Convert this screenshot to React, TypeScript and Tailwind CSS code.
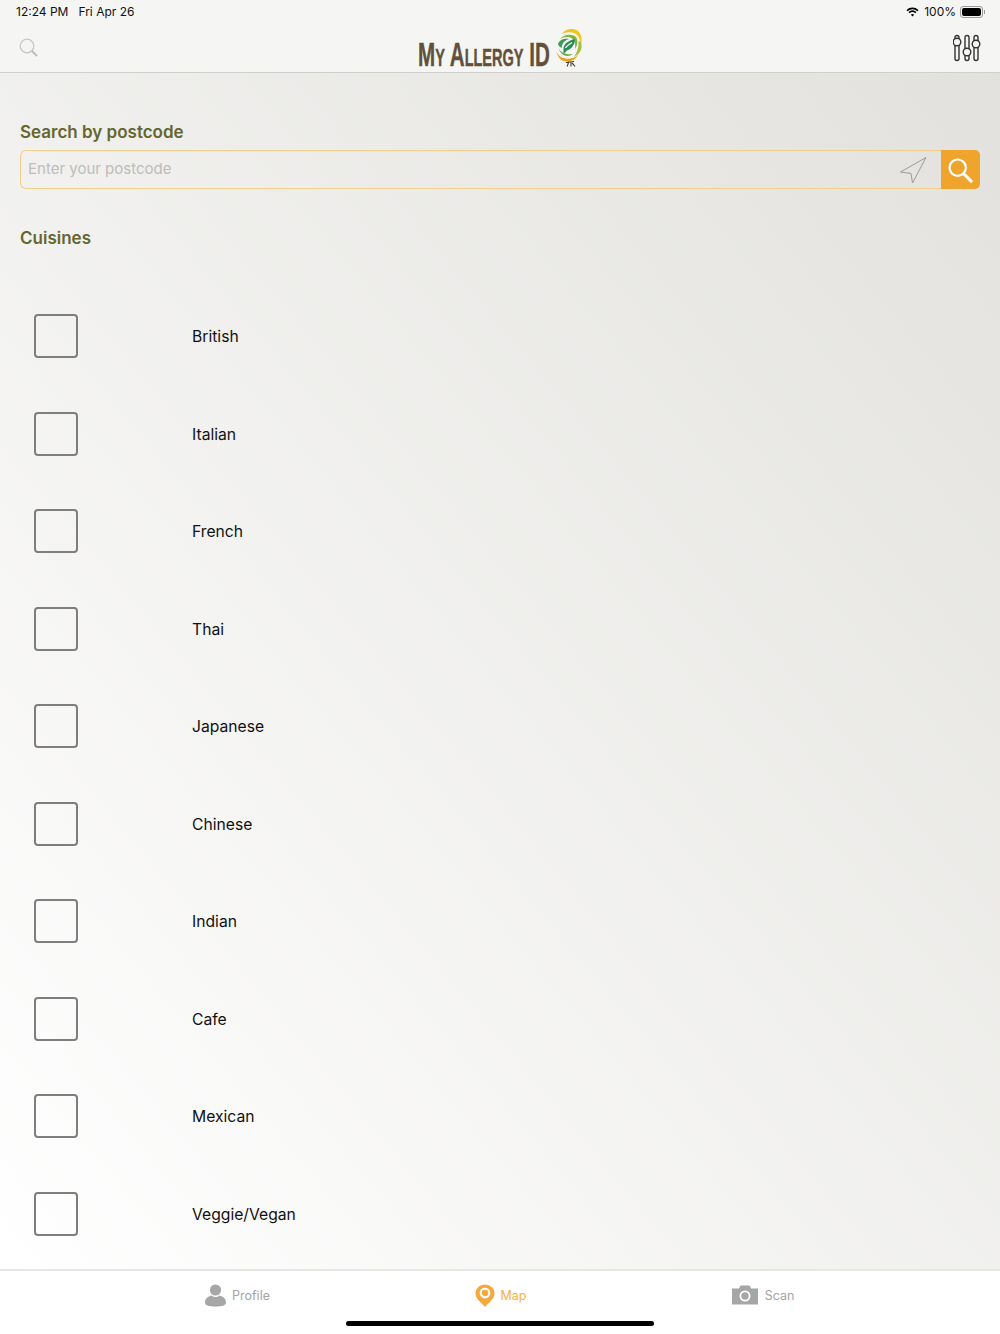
const cuisines = ["British", "Italian", "French", "Thai", "Japanese", "Chinese", "Indian", "Cafe", "Mexican", "Veggie/Vegan"];

function Logo() {
  return (
    <svg width="28" height="39" viewBox="0 0 28 39" className="ml-[5px]">
      <path d="M7 6 C10 1 19 -1 24 4 C27 8 27 13 26 17 C25 10 22 5 17 4.500 C13 4 10 4.500 7 6Z" fill="#ecc51e" />
      <path d="M26 14 C28 21 25 26 19 29 C22 24 24 20 23.500 13Z" fill="#a7c043" />
      <path d="M5 11 C9 6 17 5.500 21 9 C23 12 23 17 20 21 C21 15 19 10.500 15 9.500 C11 8.500 8 9.500 5 11Z" fill="#86b23d" />
      <path d="M3 16 C5 11 10 10.500 14 11 C10 12 7 15 6.500 20 C5 19 3.500 18 3 16Z" fill="#3f9a55" />
      <path d="M8.500 20 C9.500 15 14 12.500 20 11 C20 16 17 21 12 22.500 L8.500 26Z" fill="#2b8c58" />
      <path d="M10.500 20 C12 17.500 14.500 16 17 14.500" stroke="#f5f5f3" strokeWidth="1.2" fill="none" />
      <path d="M3.500 20 C6 25 11 27 18 26 C13 30 6 28 3.500 20Z" fill="#6ea83d" />
      <path d="M1.500 24 C4 29 9 31.500 15 30.500 C19 30 21 29 23 27 C20 33 14 34 9 33 C5 32 2.500 28 1.500 24Z" fill="#eba11f" />
      <path d="M12 38.500 C13 37 13 35 14 33.500 M16 38.500 C16 37 16 35 16 33.500 M11 34.500 L19 33.500 M20 38.500 C19 37 18 36 17 35" stroke="#4b4131" strokeWidth="1.1" fill="none" />
    </svg>
  );
}

function Sliders() {
  return (
    <svg width="28" height="28" viewBox="0 0 28 28" fill="none" stroke="#333" strokeWidth="1.4">
      <rect x="2" y="1.500" width="4" height="25" rx="2" />
      <rect x="12" y="1.500" width="4" height="25" rx="2" />
      <rect x="21" y="1.500" width="4" height="25" rx="2" />
      <circle cx="4" cy="8" r="3.800" fill="#f5f5f3" />
      <circle cx="14" cy="18" r="3.800" fill="#f5f5f3" />
      <circle cx="23" cy="10" r="3.800" fill="#f5f5f3" />
    </svg>
  );
}

function Wifi() {
  return (
    <svg width="13" height="10" viewBox="0 0 14 11" fill="none" stroke="#000" strokeWidth="1.9">
      <path d="M1 4 C4.500 .8 9.500 .8 13 4" />
      <path d="M3.200 6.200 C5.400 4.400 8.600 4.400 10.800 6.200" />
      <path d="M7 10.500 L5.200 8.400 C6.200 7.600 7.800 7.600 8.800 8.400Z" fill="#000" stroke="none" />
    </svg>
  );
}

function Battery() {
  return (
    <div className="flex items-center">
      <div className="w-[23px] h-[12px] rounded-[3px] border border-[#9a9a9a] p-[1px]">
        <div className="w-full h-full rounded-[2px] bg-black" />
      </div>
      <div className="ml-[1px] w-[1px] h-[4px] bg-[#9a9a9a]" />
    </div>
  );
}

export default function App() {
  return (
    <div className="w-[1000px] h-[1334px] flex flex-col font-['Inter','Liberation_Sans',sans-serif] overflow-hidden bg-white">
      <header className="h-[73px] shrink-0 bg-[#f5f5f3] border-b border-[#cfcfcc] flex flex-col">
        <div className="h-[24px] flex items-center justify-between pl-[16px] pr-[15px] text-[12px] leading-none text-[#111]">
          <div className="flex gap-[10px]">
            <span>12:24 PM</span>
            <span>Fri Apr 26</span>
          </div>
          <div className="flex items-center">
            <Wifi />
            <span className="ml-[5px] mr-[4px]">100%</span>
            <Battery />
          </div>
        </div>
        <div className="flex-1 flex items-center justify-between pl-[19px] pr-[19px]">
          <div className="w-[28px]">
            <svg width="19" height="19" viewBox="0 0 19 19" fill="none" stroke="#c8c8c6" strokeWidth="1.3" className="mt-[-2px]">
              <circle cx="8" cy="8" r="6.800" />
              <path d="M13 13 L18 18" strokeWidth="2" stroke="#bdbdbb" />
            </svg>
          </div>
          <div className="flex items-center mt-[-1px]">
            <div className="w-[132px] h-[34px] mt-[13px] overflow-visible">
              <span className="block w-max origin-left scale-x-[0.605] font-['Liberation_Sans',sans-serif] font-bold text-[34px] leading-[34px] text-[#63503a] [font-variant:small-caps] [-webkit-text-stroke:0.4px_#63503a] whitespace-nowrap">My Allergy ID</span>
            </div>
            <Logo />
          </div>
          <Sliders />
        </div>
      </header>

      <main className="flex-1 min-h-0 bg-gradient-to-bl from-[#e2e1dd] to-[#ffffff] px-[20px] pt-[48px]">
        <h2 className="text-[17px] leading-[22px] font-semibold text-[#66662f]">Search by postcode</h2>
        <div className="mt-[7px] h-[39px] flex">
          <div className="flex-1 flex items-center justify-between border border-r-0 border-[#f4cf8b] rounded-l-[6px] pl-[7px] pr-[14px]">
            <span className="text-[15px] leading-[20px] mt-[-2px] text-[#bdbdbb]">Enter your postcode</span>
            <svg width="28" height="28" viewBox="0 0 28 28" fill="none" stroke="#9b9b99" strokeWidth="1">
              <path d="M1.500 16 L27 1.500 L13.500 27 L12 17.500Z" />
            </svg>
          </div>
          <div className="w-[39px] bg-[#efa42c] rounded-r-[5px] flex items-center justify-center">
            <svg width="26" height="26" viewBox="0 0 28 28" fill="none" stroke="#fff" strokeWidth="2.400" className="mr-[1px]">
              <circle cx="11.500" cy="11.500" r="8.800" />
              <path d="M18 18 L26 26" strokeWidth="3.200" strokeLinecap="round" />
            </svg>
          </div>
        </div>
        <h2 className="mt-[38px] text-[17px] leading-[22px] font-semibold text-[#66662f]">Cuisines</h2>
        <ul className="mt-[38.5px]">
          {cuisines.map((c) => (
            <li key={c} className="h-[97.5px] flex items-center pl-[14px]">
              <div className="w-[44px] h-[44px] rounded-[4px] border-2 border-[#7e7e7e]" />
              <span className="ml-[114px] mt-[2px] text-[15.7px] leading-[24px] text-[#111]">{c}</span>
            </li>
          ))}
        </ul>
      </main>

      <footer className="h-[65px] shrink-0 bg-white border-t-2 border-[#e6e6e4] relative">
        <div className="flex h-[48px] items-center justify-center text-[12.5px]">
          <div className="w-[262.5px] flex items-center justify-center gap-[6px] text-[#a5a5a5]">
            <svg width="21" height="23" viewBox="0 0 21 23" fill="#a6a6a6">
              <circle cx="10.500" cy="6" r="5.600" />
              <path d="M0 18.500 C0 14.500 3 12.500 6.500 11.500 C9 13.500 12 13.500 14.500 11.500 C18 12.500 21 14.500 21 18.500 C21 21.500 17 22.500 10.500 22.500 C4 22.500 0 21.500 0 18.500Z" />
            </svg>
            <span className="mt-[3px]">Profile</span>
          </div>
          <div className="w-[262.5px] pl-[1px] flex items-center justify-center gap-[6px] text-[#f5b041]">
            <svg width="20" height="23" viewBox="0 0 20 23" fill="none">
              <path d="M10 23 C7 19 0.500 15.500 0.500 9.500 C0.500 4 5 0.500 10 0.500 C15 0.500 19.500 4 19.500 9.500 C19.500 15.500 13 19 10 23Z" fill="#f5a93a" />
              <circle cx="10" cy="9" r="4.300" fill="none" stroke="#fff" strokeWidth="2.200" />
            </svg>
            <span className="mt-[3px]">Map</span>
          </div>
          <div className="w-[262.5px] pl-[1px] flex items-center justify-center gap-[7px] text-[#a5a5a5]">
            <svg width="26" height="20" viewBox="0 0 26 20" fill="#a6a6a6">
              <path d="M0 3.500 H7 L8.500 0.500 H17.500 L19 3.500 H26 V19.500 H0Z" />
              <circle cx="13" cy="11" r="4.600" fill="none" stroke="#fff" strokeWidth="1.800" />
            </svg>
            <span className="mt-[3px]">Scan</span>
          </div>
        </div>
        <div className="absolute left-[346px] top-[50px] w-[308px] h-[5px] rounded-full bg-black" />
      </footer>
    </div>
  );
}
